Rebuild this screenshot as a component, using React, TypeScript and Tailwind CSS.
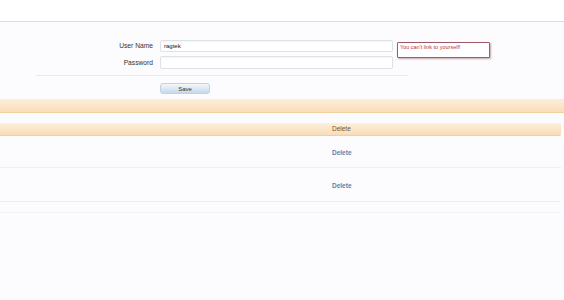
import React from "react";

export default function App() {
  const font = { fontFamily: '"Liberation Sans", Arial, sans-serif' };
  return (
    <div className="relative w-[564px] h-[300px] bg-[#fcfcfe] overflow-hidden" style={font}>
      <div className="h-[22px] bg-white border-b border-[#d6dfe4]" />
      <div className="pt-[18px]">
        <div className="flex items-center h-[12px]">
          <div className="w-[153px] text-right text-[6.7px] leading-none text-[#333] pt-[1px]">User Name</div>
          <div className="ml-[7px] w-[233px] h-[12px] border border-[#dde2e6] rounded-[2px] bg-white flex items-center pl-[3px] text-[6px] text-[#111] shadow-[inset_0_1px_1px_rgba(0,0,0,0.04)]">
            ragtek
          </div>
        </div>
        <div className="flex items-center h-[13px] mt-[4px]">
          <div className="w-[153px] text-right text-[6.7px] leading-none text-[#333] pt-[2px]">Password</div>
          <div className="ml-[7px] w-[233px] h-[13px] border border-[#dde2e6] rounded-[2px] bg-white shadow-[inset_0_1px_1px_rgba(0,0,0,0.04)]" />
        </div>
        <div className="ml-[36px] mt-[6px] w-[372px] h-px bg-[#e6ebef]" />
        <div className="ml-[160px] mt-[7px] w-[50px] h-[11px] rounded-[3px] border border-[#c2d2df] bg-gradient-to-b from-[#f3f7fb] to-[#c6d9e9] flex items-center justify-center text-[6px] text-[#333] leading-none">
          Save
        </div>
        <div className="mt-[5px] h-[14px] bg-gradient-to-b from-[#fdeedb] to-[#f9ddb8] border-b border-[#f2cf9f]" />
        <div className="mt-[10px] w-[561px] h-[13px] rounded-r-[2px] bg-gradient-to-b from-[#fdeedb] to-[#f9ddb8] border-b border-[#f2cf9f] flex items-center">
          <div className="ml-[332px] mt-[1px] text-[6.5px] leading-none text-[#6b5431]">Delete</div>
        </div>
        <div className="w-[561px] h-[32px] border-b border-[#eceff3] flex items-center">
          <div className="ml-[332px] mt-[3px] text-[6.5px] leading-none text-[#5684b0] font-bold">Delete</div>
        </div>
        <div className="w-[561px] h-[34px] border-b border-[#eceff3] flex items-center">
          <div className="ml-[332px] mt-[3px] text-[6.5px] leading-none text-[#5684b0] font-bold">Delete</div>
        </div>
        <div className="mt-[10px] w-[561px] h-px bg-[#eef3f6]" />
      </div>
      <div className="absolute left-[397px] top-[42px] w-[93px] h-[16px] bg-white border border-[#a0596a] rounded-[1px] shadow-[1px_1px_2px_rgba(120,60,70,0.45)] px-[2px] pt-[1px] text-[5.5px] leading-[7px] text-[#b8353a]">
        You can't link to yourself!
      </div>
    </div>
  );
}
